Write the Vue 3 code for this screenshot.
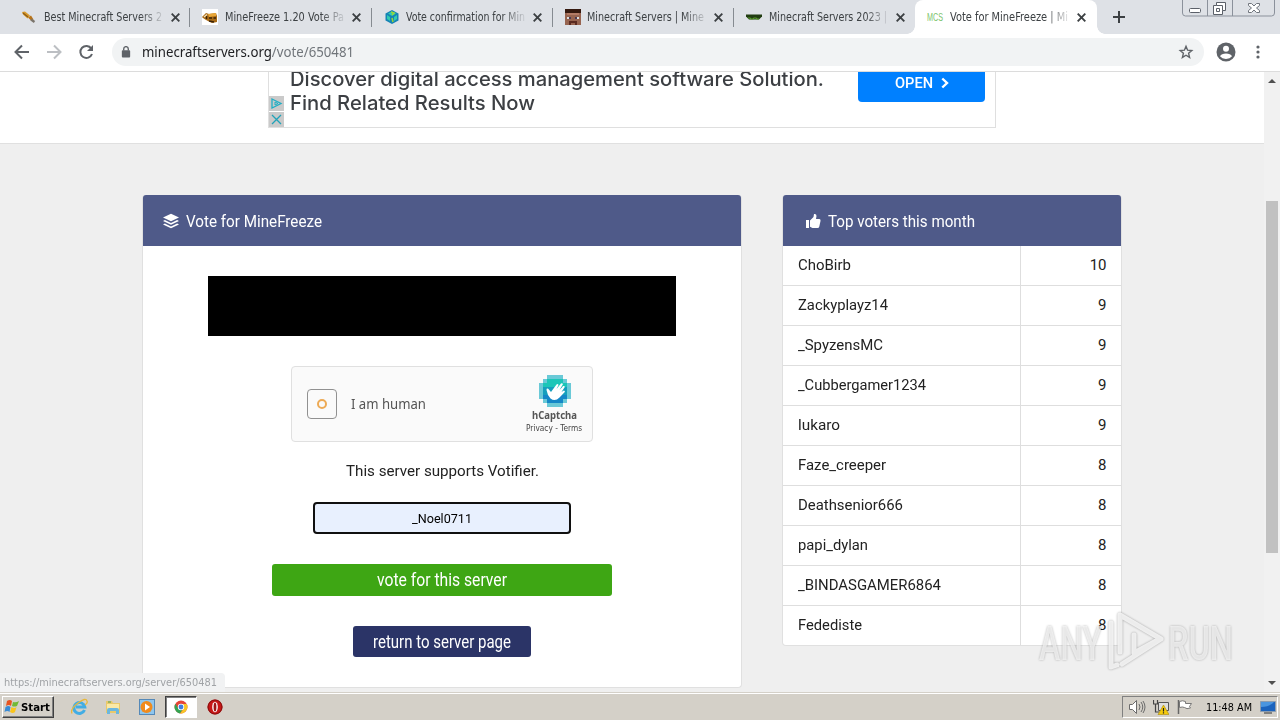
<script setup>
// Sets a line of text to an exact advance width by scaling it horizontally.
const vFit = {
  mounted(el, { value }) {
    const natural = el.getBoundingClientRect().width
    el.style.width = value + 'px'
    el.style.transform = `scaleX(${value / natural})`
  },
}

const tabs = [
  { icon: 'sword', title: 'Best Minecraft Servers 2', w: 118 },
  { icon: 'cat', title: 'MineFreeze 1.20 Vote Pa', w: 119 },
  { icon: 'cube', title: 'Vote confirmation for Min', w: 119 },
  { icon: 'face', title: 'Minecraft Servers | Mine', w: 117 },
  { icon: 'grass', title: 'Minecraft Servers 2023 |', w: 118 },
  { icon: 'mcs', title: 'Vote for MineFreeze | Mi', w: 118, active: true },
]

const voters = [
  { name: 'ChoBirb', votes: 10, w: 53 },
  { name: 'Zackyplayz14', votes: 9, w: 90 },
  { name: '_SpyzensMC', votes: 9, w: 85 },
  { name: '_Cubbergamer1234', votes: 9, w: 128 },
  { name: 'lukaro', votes: 9, w: 42 },
  { name: 'Faze_creeper', votes: 8, w: 88 },
  { name: 'Deathsenior666', votes: 8, w: 105 },
  { name: 'papi_dylan', votes: 8, w: 70 },
  { name: '_BINDASGAMER6864', votes: 8, w: 143 },
  { name: 'Fedediste', votes: 8, w: 64 },
]
</script>

<template>
  <div class="screen">
    <div class="tabstrip">
      <div v-for="t in tabs" :key="t.icon" class="tab" :class="{ active: t.active }">
        <svg v-if="t.icon === 'sword'" class="fav" viewBox="0 0 16 16">
          <path d="M1 3l3-.5 5 4-2.500 3-4.500-4z" fill="#d99a2b" /><path d="M2 4l5 4" stroke="#8a5a18" stroke-width="1.200" />
          <path d="M7 8.500l3-2 2.500 4-2 1.500z" fill="#b87318" /><path d="M10 10.500l3.500 2.500" stroke="#7b756c" stroke-width="2.200" />
        </svg>
        <svg v-else-if="t.icon === 'cat'" class="fav" viewBox="0 0 16 16">
          <rect width="16" height="16" fill="#fff" /><path d="M0 8l4-4 3 1 7-1 1 3v6l-5 1-6-3-3-2z" fill="#a86a16" />
          <path d="M6 5l8-1v3l-7 1z" fill="#e8a637" /><path d="M7 9h3M11.500 9h2.500M7 12l5 1M4.500 7v3" stroke="#3b2205" stroke-width="1.400" /><path d="M2 8l3-2.500" fill="none" stroke="#f5dfb4" stroke-width="1.300" />
        </svg>
        <svg v-else-if="t.icon === 'cube'" class="fav" viewBox="0 0 16 16">
          <path d="M8 1l6.500 3.500v7L8 15l-6.500-3.500v-7z" fill="#1683b5" /><path d="M8 2.500l4 2-4 2.500-4-2.500zM3 6l3 2v4l-3-2zM13 6l-3 2v4l3-2z" fill="#31cbb0" />
          <path d="M7 3l3 1-2 2M8 9l1 4" stroke="#9bd738" stroke-width="1.500" fill="none" />
        </svg>
        <svg v-else-if="t.icon === 'face'" class="fav" viewBox="0 0 8 8" shape-rendering="crispEdges">
          <rect width="8" height="8" fill="#976450" /><path d="M0 0h8v2h-1v1h-6v-1h-1z" fill="#35190f" /><path d="M1 2h6v1h-6z" fill="#b47c66" />
          <path d="M1 4h1v1h-1zM6 4h1v1h-1z" fill="#ddd" /><path d="M2 4h1v1h-1zM5 4h1v1h-1z" fill="#493b55" /><path d="M2 6h4v2h-1v-1h-2v1h-1z" fill="#5b2a20" />
        </svg>
        <svg v-else-if="t.icon === 'grass'" class="fav" viewBox="0 0 16 16">
          <path d="M0 5.500h16v2l-2 2-1 1H3l-1-1-2-2z" fill="#213d12" /><path d="M2 9h2l1 1h2l1-1h2l1 1h2" fill="none" stroke="#5a9c2d" stroke-width="1.200" />
        </svg>
        <svg v-else class="fav" viewBox="0 0 16 16">
          <text x="0" y="12" font-family="Liberation Sans" font-size="10" fill="#7cc36c" textLength="16" lengthAdjust="spacingAndGlyphs">MCS</text>
        </svg>
        <span class="title"><span v-fit="t.w" class="fit">{{ t.title }}</span></span>
        <svg class="close" viewBox="0 0 9 9"><path d="M.7.7l7.600 7.600M8.300.7L.7 8.300" stroke="#3c4043" stroke-width="1.900" /></svg>
      </div>
      <svg class="plus" viewBox="0 0 12 12"><path d="M6 0v12M0 6h12" stroke="#3c4043" stroke-width="2" /></svg>
      <svg class="winctl" viewBox="0 0 94 18" fill="none">
        <path d="M.5 0v13q0 3 3 3h86q3 0 3-3V0M25.500 0v16M50.500 0v16" stroke="#8b919b" />
        <rect x="7.500" y="8.500" width="11" height="4" rx="1" fill="#fff" stroke="#5b6069" />
        <path d="M34.500 2.500h9v8h-3v4h-9v-9h3z" fill="#fff" stroke="#5b6069" /><path d="M34.500 5.500h6v5M34.500 8.500h3v3h-3z" stroke="#5b6069" />
        <path d="M66.500 3.500h3l2.500 2.500 2.500-2.500h3v2l-3 2.500 3 2.500v2h-3l-2.500-2.500-2.500 2.500h-3v-2l3-2.500-3-2.500z" fill="#fff" stroke="#70757d" />
      </svg>
    </div>

    <div class="toolbar">
      <svg class="nav" viewBox="0 0 112 38" fill="none" stroke-width="2">
        <path d="M29 18H16M22 11.500L15.500 18l6.500 6.500" stroke="#5f6368" />
        <path d="M47 18h13M54 11.500l6.500 6.500-6.500 6.500" stroke="#bcbfc3" />
        <path d="M91.300 14.500A6 6 0 1 0 92 20" stroke="#5f6368" /><path d="M93 11v6h-6z" fill="#5f6368" />
      </svg>
      <div class="omnibox">
        <svg class="lock" viewBox="0 0 10 13"><rect x=".5" y="4.500" width="9" height="8" rx="1" fill="#5f6368" /><path d="M2.500 5V3.200a2.500 2.500 0 0 1 5 0V5" fill="none" stroke="#5f6368" stroke-width="1.500" /></svg>
        <span v-fit="212" class="fit url">minecraftservers.org<i>/vote/650481</i></span>
        <svg class="star" viewBox="0 0 16 16"><path d="M8 2.300l1.600 3.900 4.200.3-3.200 2.800 1 4.100L8 11.200l-3.600 2.200 1-4.100-3.200-2.800 4.200-.3z" fill="none" stroke="#5f6368" stroke-width="1.400" /></svg>
      </div>
      <svg class="avatar" viewBox="0 0 20 20"><circle cx="10" cy="10" r="9.500" fill="#5f6368" /><circle cx="10" cy="6.800" r="3" fill="#fff" /><path d="M4 14.300q1.500-2.700 6-2.700t6 2.700q-2 2.600-6 2.600t-6-2.600z" fill="#fff" /></svg>
      <svg class="dots" viewBox="0 0 4 14" fill="#5f6368"><circle cx="2" cy="2" r="1.600" /><circle cx="2" cy="7" r="1.600" /><circle cx="2" cy="12" r="1.600" /></svg>
    </div>

    <div class="viewport">
      <div class="page">
        <header class="banner">
          <div class="ad">
            <div class="adside">
              <svg viewBox="0 0 15 15"><path d="M3 3l9 4.500L3 12z" fill="none" stroke="#20aec4" stroke-width="1.300" /><path d="M6 6l3 1.500L6 9z" fill="none" stroke="#20aec4" /></svg>
              <svg viewBox="0 0 15 15"><path d="M3 3l9 9M12 3l-9 9" stroke="#20a3b9" stroke-width="1.300" /></svg>
            </div>
            <div class="adtext">
              <span v-fit="534" class="fit">Discover digital access management software Solution.</span>
              <span v-fit="245" class="fit">Find Related Results Now</span>
            </div>
            <div class="open">
              <span v-fit="38" class="fit">OPEN</span>
              <svg viewBox="0 0 8 12"><path d="M1.300 1.500L6 6l-4.700 4.500" fill="none" stroke="#fff" stroke-width="2.400" /></svg>
            </div>
          </div>
        </header>
        <main class="columns">
          <section class="panel vote">
            <h2>
              <svg viewBox="0 0 16 16" fill="#fff"><path d="M8 .7l8 3.800-8 3.800L0 4.500z" /><path d="M0 8l1.900-.9L8 10l6.100-2.900L16 8l-8 3.800z" /><path d="M0 11.500l1.900-.9L8 13.500l6.100-2.900 1.900.9-8 3.800z" /></svg>
              <span v-fit="136" class="fit">Vote for MineFreeze</span>
            </h2>
            <div class="body">
              <div class="blackout"></div>
              <div class="captcha">
                <div class="check"><b></b></div>
                <span v-fit="75" class="fit human">I am human</span>
                <div class="brand">
                  <svg class="hand" viewBox="0 0 32 32">
                    <g shape-rendering="crispEdges"><path d="M8 0h16v4h4v4h4v16h-4v4h-4v4H8v-4H4v-4H0V8h4V4h4z" fill="#39b8cb" opacity=".75" />
                    <path d="M8 4h16v4h4v4H4V8h4z" fill="#1cc6b8" /><path d="M4 12h24v8H4z" fill="#159fbd" /><path d="M4 20h24v4h-4v4H8v-4H4z" fill="#1587c7" /></g>
                    <path d="M9 20l-1.500-5q0-2 1.700-1.300L12 17l5.500-7.500q1.500-1 2 .4L17.500 14l4.500-5.500q1.600-.8 1.900.8L20.500 15l3.700-4q1.600-.5 1.600 1.100L22.500 17l2.300-1.600q1.500 0 1 1.500L20.500 22.500Q16 27 11.500 23.500z" fill="#fff" />
                  </svg>
                  <span v-fit="45" class="fit hc">hCaptcha</span>
                  <span v-fit="56" class="fit pt">Privacy - Terms</span>
                </div>
              </div>
              <p><span v-fit="193" class="fit">This server supports Votifier.</span></p>
              <div class="input"><span v-fit="60" class="fit">_Noel0711</span></div>
              <div class="btn green"><span v-fit="130" class="fit">vote for this server</span></div>
              <div class="btn navy"><span v-fit="138" class="fit">return to server page</span></div>
            </div>
          </section>
          <section class="panel top">
            <h2>
              <svg viewBox="0 0 16 16" fill="#fff"><path d="M1 7h3v8H1z" /><path d="M5 7.500L8.500 4 9 1q2.500-.5 2.500 2L11 6h3.500q1.500.3 1 2l-1.200 5.500Q14 15 12.500 15H7.500L5 13.800z" /></svg>
              <span v-fit="147" class="fit">Top voters this month</span>
            </h2>
            <div v-for="v in voters" :key="v.name" class="row">
              <div class="name"><span v-fit="v.w" class="fit">{{ v.name }}</span></div>
              <div class="votes">{{ v.votes }}</div>
            </div>
          </section>
        </main>
      </div>
      <div class="scroll">
        <svg viewBox="0 0 8 4"><path d="M0 4l4-4 4 4z" fill="#505050" /></svg>
        <div class="thumb"></div>
        <svg viewBox="0 0 8 4"><path d="M0 0l4 4 4-4z" fill="#505050" /></svg>
      </div>
      <div class="status"><span v-fit="213" class="fit">https://minecraftservers.org/server/650481</span></div>
      <svg class="mark" viewBox="0 0 204 72">
        <g font-family="Roboto" font-size="49" font-weight="500" fill="#fafafa" fill-opacity=".72">
          <text x="5" y="55" textLength="63" lengthAdjust="spacingAndGlyphs">ANY</text>
          <text x="134" y="55" textLength="65" lengthAdjust="spacingAndGlyphs">RUN</text>
        </g>
        <path d="M86 47V10L127 34 88 59M77 18v44l6-2M100 30v18l22-12" fill="none" stroke="#f8f8f8" stroke-opacity=".85" stroke-width="5" stroke-linejoin="round" stroke-linecap="round" />
      </svg>
    </div>

    <footer class="taskbar">
      <div class="start">
        <svg viewBox="0 0 16 16"><path d="M3 2q3-2 5 0L7 7Q5 5 2 7z" fill="#e9541f" /><path d="M9 3q3 1 6-1l-2 5q-3 1-5 0z" fill="#72b936" /><path d="M1.500 8q3-2 5 0l-1 5q-2-2-5 0z" fill="#398bd5" /><path d="M7.500 8q3 2 5 0l-1.500 5q-2 2-5 0z" fill="#fac51c" /></svg>
        <span v-fit="29" class="fit">Start</span>
      </div>
      <div class="slot"><svg viewBox="0 0 18 18"><path d="M14.500 12a5.500 5.500 0 1 1 .3-3H6" fill="none" stroke="#42ade4" stroke-width="3" /><path d="M2 15.500Q0 11 8 5t9-2q1 2-2 4" fill="none" stroke="#e8b83b" stroke-width="1.300" /></svg></div>
      <div class="slot"><svg viewBox="0 0 18 18"><path d="M2 3h6l1 2h7v10H2z" fill="#e9c96b" /><path d="M3 6h12v6H3z" fill="#fae9a6" /><path d="M3 16v-4q0-2 2-2h8q2 0 2 2v4h-3v-3H6v3z" fill="#6cb7de" /><path d="M4 4h3" stroke="#4b9c58" /></svg></div>
      <div class="slot"><svg viewBox="0 0 18 18"><rect x="1.500" y="1.500" width="15" height="15" fill="#8ec6ee" stroke="#5589b8" /><circle cx="8.500" cy="9" r="6" fill="#f08b1d" /><path d="M7 5.500l5 3.500-5 3.500z" fill="#fff" /></svg></div>
      <div class="slot pressed"><svg viewBox="0 0 18 18"><circle cx="9" cy="9" r="6.500" fill="#e64537" /><path d="M3.400 5.700A6.500 6.500 0 0 0 8 15.400L11.500 10 6 10z" fill="#32a452" /><path d="M9 6h5.700A6.500 6.500 0 0 1 8 15.400L11.500 11z" fill="#f7c626" /><circle cx="9" cy="9" r="3.200" fill="#fff" /><circle cx="9" cy="9" r="2.400" fill="#3f7de0" /></svg></div>
      <div class="slot"><svg viewBox="0 0 18 18"><circle cx="9" cy="9" r="7.500" fill="#c81616" /><circle cx="9" cy="9" r="7" fill="none" stroke="#821010" /><ellipse cx="9" cy="9" rx="2.800" ry="5.200" fill="#fff" /><ellipse cx="9" cy="9" rx="1.400" ry="4.600" fill="#9d1515" /></svg></div>
      <div class="tray">
        <svg class="snd" viewBox="0 0 18 16" fill="none" stroke="#6b6b6b"><path d="M1.500 5.500h3l4-4v13l-4-4h-3z" fill="#fff" /><path d="M11 5q2 3 0 6M13 3q3.500 5 0 10M15 2q4 6 0 12" /></svg>
        <svg class="net" viewBox="0 0 16 16"><path d="M5.500 3.500h10v8h-10z" fill="#ddd" stroke="#555" /><path d="M.500 1v4h4V1M2.500 5v8h4" fill="none" stroke="#444" stroke-width="1.200" /><path d="M10.500 6l5.500 9.500H5z" fill="#f5cb0c" stroke="#a98a0a" stroke-width=".6" /><path d="M10.500 9v3.500M10.500 13.300v1.200" stroke="#222" stroke-width="1.200" /></svg>
        <svg class="flag" viewBox="0 0 16 16"><path d="M1.500 1v14" stroke="#666" stroke-width="1.500" /><path d="M2.500 2.500q3-1.500 6 0v2h6l-2 3 1 1.500q-4 1.500-6-.500-2-1-5 0z" fill="#fff" stroke="#777" /></svg>
        <span v-fit="46" class="fit">11:48 AM</span>
        <svg class="desk" viewBox="0 0 16 14"><path d="M.500 1.500h15v10H.500z" fill="#1b63bd" stroke="#8c9cae" /><path d="M1 7q8 0 13-5H1z" fill="#4a95df" /><path d="M4 13h8" stroke="#666" stroke-width="1.500" /></svg>
      </div>
    </footer>
  </div>
</template>

<style>
html, body { margin: 0; overflow: hidden; }
</style>

<style scoped>
* { box-sizing: border-box; }
svg { display: block; flex: none; }
.screen { width: 1280px; height: 720px; display: flex; flex-direction: column; background: #fff; overflow: hidden; font-family: "Roboto", sans-serif; color: #222; }
.fit { display: inline-block; white-space: nowrap; transform-origin: 0 50%; text-align: left; flex: none; }

.tabstrip { height: 34px; flex: none; background: #dee1e6; display: flex; padding-left: 9px; font-family: "DejaVu Sans Condensed", "DejaVu Sans", sans-serif; font-size: 12px; color: #3c4043; position: relative; }
.tab { width: 181.300px; flex: none; display: flex; align-items: center; padding-left: 12px; position: relative; }
.tab:not(.active)::after { content: ""; position: absolute; right: 0; top: 8px; width: 1px; height: 19px; background: #868b91; }
.tab:nth-child(5)::after { display: none; }
.tab.active { background: #fff; border-radius: 8px 8px 0 0; }
.tab.active::before, .tab.active::after { content: ""; position: absolute; bottom: 0; width: 8px; height: 8px; }
.tab.active::before { left: -8px; background: radial-gradient(circle at 0 0, transparent 7.500px, #fff 8px); }
.tab.active::after { right: -8px; background: radial-gradient(circle at 100% 0, transparent 7.500px, #fff 8px); }
.fav { width: 16px; height: 16px; overflow: visible; }
.title { width: 120px; height: 18px; line-height: 18px; margin-left: 6.500px; overflow: hidden; -webkit-mask-image: linear-gradient(90deg, #000 96px, transparent 122px); mask-image: linear-gradient(90deg, #000 96px, transparent 122px); }
.close { width: 9px; height: 9px; margin-left: 7px; }
.plus { width: 12px; height: 12px; margin: 11px 0 0 16px; }
.winctl { position: absolute; right: 4px; top: 0; width: 94px; height: 18px; }

.toolbar { height: 38px; flex: none; display: flex; align-items: center; border-bottom: 1px solid #dcdcdc; }
.nav { width: 112px; height: 38px; }
.omnibox { width: 1092px; height: 28px; margin-top: -1px; border-radius: 14px; background: #f1f3f4; display: flex; align-items: center; padding: 0 10px; flex: none; }
.lock { width: 10px; height: 12px; margin: -1px 0 0 -1px; }
.omnibox .url { margin-left: 11px; font: 14px/20px "Noto Sans", sans-serif; color: #202124; }
.url i { font-style: normal; color: #70757a; }
.star { width: 16px; height: 16px; margin-left: auto; }
.omnibox .lock { margin-left: -1px; }
.omnibox { padding-left: 10px; }
.avatar { width: 20px; height: 20px; margin: -1px 0 0 12px; }
.dots { width: 4px; height: 14px; margin: -1px 0 0 20px; }

.viewport { height: 620px; flex: none; display: flex; position: relative; }
.page { width: 1264px; background: #efefef; overflow: hidden; }
.banner { height: 72px; background: #fff; border-bottom: 1px solid #e0e0e0; }
.ad { width: 728px; height: 56px; margin-left: 268px; border: 1px solid #dfdfdf; border-top: 0; display: flex; }
.adside { width: 15px; height: 56px; padding-top: 24px; display: flex; flex-direction: column; gap: 1px; }
.adside svg { width: 15px; height: 15px; background: #cacaca; }
.adtext { width: 574px; padding-left: 5.500px; display: flex; flex-direction: column; align-items: flex-start; font: 500 20px/24px "Inter", sans-serif; color: #3c3f43; margin-top: -5px; }
.open { width: 127px; height: 30px; background: #0080ff; border-radius: 0 0 4px 4px; color: #fff; font-size: 14px; font-weight: 500; display: flex; align-items: center; justify-content: center; gap: 8px; padding-bottom: 8px; }
.open svg { width: 8px; height: 12px; }

.columns { display: flex; align-items: flex-start; gap: 40px; padding: 51px 0 0 142px; }
.panel { background: #fff; border: 1px solid #e0e0e0; border-top: 0; border-radius: 4px; }
.panel h2 { margin: 0; height: 51px; background: #4f5a89; border-radius: 3px 3px 0 0; color: #fff; font-size: 17px; line-height: 24px; font-weight: 400; display: flex; align-items: center; gap: 7px; padding: 1px 0 0 20px; }
.panel h2 svg { width: 16px; height: 16px; }
.vote { width: 600px; height: 493px; }
.body { display: flex; flex-direction: column; align-items: center; padding-top: 30px; }
.blackout { width: 468px; height: 60px; background: #000; }
.captcha { width: 302px; height: 76px; margin-top: 30px; border: 1px solid #e0e0e0; border-radius: 4px; background: #fafafa; display: flex; align-items: center; padding-left: 15px; }
.check { width: 30px; height: 30px; border: 1px solid #919191; border-radius: 4px; display: flex; align-items: center; justify-content: center; }
.check b { width: 10px; height: 10px; border-radius: 50%; border: 2px solid #edaa55; }
.captcha .human { margin-left: 14px; font: 14px/20px "Noto Sans", sans-serif; color: #555; }
.brand { margin-left: auto; width: 75px; display: flex; flex-direction: column; align-items: center; }
.hand { width: 32px; height: 32px; margin-top: 2px; }
.hc { font: 700 10px/14px "Noto Sans", sans-serif; color: #555; margin-top: 1px; }
.pt { font: 8px/12px "DejaVu Sans", sans-serif; color: #444; margin-top: 1px; margin-left: -2px; }
.body p { margin: 19px 0 0; font-size: 15px; line-height: 20px; height: 20px; }
.input { width: 258px; height: 32px; margin-top: 21px; border: 2px solid #101010; border-radius: 4px; background: #e8f0fe; display: flex; align-items: center; justify-content: center; font-size: 13px; color: #000; padding-top: 1px; }
.btn { height: 32px; border-radius: 3px; display: flex; align-items: center; justify-content: center; color: #fff; font-size: 18px; line-height: 30px; font-weight: 400; margin-top: 30px; }
.green { width: 340px; background: #3ea614; }
.navy { width: 178px; height: 31px; background: #2b3467; }
.top { width: 340px; }
.top h2 { padding-left: 22px; }
.row { height: 40px; display: flex; border-bottom: 1px solid #dedede; font-size: 15px; line-height: 38px; }
.row:last-child { border-bottom: 0; height: 39px; }
.name { width: 238px; padding-left: 15px; border-right: 1px solid #dedede; }
.votes { flex: 1; text-align: right; padding-right: 14.500px; }

.scroll { width: 16px; background: #f1f1f1; display: flex; flex-direction: column; align-items: center; justify-content: space-between; padding: 7px 0; position: relative; }
.scroll svg { width: 8px; height: 4px; }
.thumb { position: absolute; left: 2px; top: 129px; width: 12px; height: 352px; background: #c1c1c1; }
.status { position: absolute; left: 0; bottom: 0; width: 225px; height: 19px; background: #f1f2f3; border-radius: 0 4px 0 0; padding-left: 4px; font: 11px/20px "DejaVu Sans Condensed", sans-serif; color: #a0a3a6; }
.mark { position: absolute; left: 1034px; top: 533px; width: 204px; height: 72px; filter: drop-shadow(0 0 1.200px rgba(0, 0, 0, .38)); }

.taskbar { height: 28px; flex: none; background: #d4d0c8; border-top: 1px solid #d4d0c8; box-shadow: inset 0 1px #fff; display: flex; padding: 3px 2px 0; font-family: "DejaVu Sans Condensed", sans-serif; color: #000; position: relative; }
.start { width: 52px; height: 22px; border: 1px solid; border-color: #fff #404040 #404040 #fff; box-shadow: inset -1px -1px #808080; display: flex; align-items: center; gap: 1px; padding-left: 1px; font-size: 11px; font-weight: 700; margin-right: 9px; }
.start svg { width: 16px; height: 16px; }
.slot { width: 32px; height: 22px; margin-right: 2px; display: flex; align-items: center; justify-content: center; }
.slot svg { width: 18px; height: 18px; }
.pressed { border: 1px solid; border-color: #404040 #fff #fff #404040; box-shadow: inset 1px 1px #808080; background: #fff; }
.tray { width: 156px; height: 22px; margin-left: auto; border: 1px solid; border-color: #808080 #fff #fff #808080; display: flex; align-items: center; font-size: 11px; padding-left: 5px; }
.snd { width: 18px; height: 16px; }
.net { width: 16px; height: 16px; margin-left: 7px; }
.flag { width: 16px; height: 16px; margin-left: 8px; }
.tray .fit { margin-left: 13px; }
.desk { width: 16px; height: 14px; margin-left: 8px; }
</style>
